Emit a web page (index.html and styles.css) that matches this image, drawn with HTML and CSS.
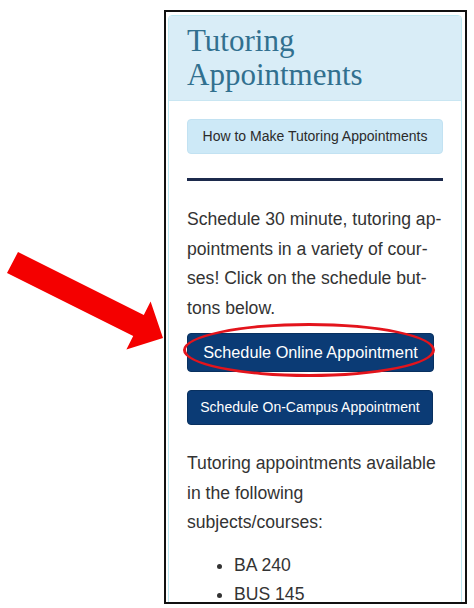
FILE: index.html
```html
<!DOCTYPE html>
<html lang="en">
<head>
  <meta charset="UTF-8" />
  <title>Tutoring Appointments</title>
  <meta name="viewport" content="width=device-width, initial-scale=1.0" />
  <link rel="stylesheet" href="styles.css">
</head>

<body>
  <!-- red arrow pointing at the online button -->
  <svg class="arrow" width="474" height="608" viewBox="0 0 474 608">
    <polygon points="18,252 143.8,314.9 150.6,301.4 163,338 126.4,349.6 133.2,336.1 7,273" fill="#f40000" />
  </svg>

  <div class="frame">
    <div class="panel">
      <div class="panel-heading">
        <h2>Tutoring Appointments</h2>
      </div>

      <div class="panel-body">
        <div class="btn btn-info">How to Make Tutoring Appointments</div>
        <hr>
        <p>Schedule 30 minute, tutoring ap&shy;pointments in a variety of cour&shy;ses! Click on the schedule but&shy;tons below.</p>

        <div class="btn btn-primary btn-online">
          Schedule Online Appointment
          <span class="circle"></span>
        </div>
        <div class="btn btn-primary btn-campus">Schedule On-Campus Appointment</div>

        <p class="subjects">Tutoring appointments available in the following subjects/courses:</p>
        <ul>
          <li>BA 240</li>
          <li>BUS 145</li>
        </ul>
      </div>
    </div>
  </div>
</body>
</html>
```

FILE: styles.css
```css
body {
  margin: 0;
  font-family: 'Liberation Sans', Arial, Helvetica, sans-serif;
  background: #ffffff;
  color: #333333;
}

.arrow {
  position: absolute;
  left: 0;
  top: 0;
  pointer-events: none;
}

.frame {
  margin: 10px 0 0 164px;
  border: 2px solid #111111;
  padding: 3px 3px 0 2px;
  box-sizing: border-box;
  width: 303px;
  height: 594px;
  overflow: hidden;
}

.panel {
  border: 1px solid #bce8f1;
  border-radius: 4px;
  background: #ffffff;
  min-height: 700px;
}

.panel-heading {
  background-color: #d9edf7;
  border-bottom: 1px solid #c9e6f2;
  border-radius: 3px 3px 0 0;
  padding: 8px 18px 8px;
}

.panel-heading h2 {
  margin: 0;
  font-family: 'Liberation Serif', Georgia, serif;
  font-weight: normal;
  font-size: 31px;
  line-height: 34px;
  color: #31708f;
}

.panel-body {
  padding: 18px 18px 0 18px;
}

.btn {
  border-radius: 4px;
  box-sizing: border-box;
  text-align: center;
}

.btn-info {
  background-color: #cde9f7;
  border: 1px solid #c2e2f2;
  color: #2b2b2b;
  font-size: 14px;
  height: 35px;
  line-height: 33px;
}

hr {
  margin: 24px 0 0;
  border: none;
  height: 3px;
  background: #1c2a4c;
}

p {
  margin: 24px 0 0;
  font-size: 17.6px;
  line-height: 29.5px;
  hyphens: manual;
}

.btn-primary {
  background-color: #0b3b75;
  border: 1px solid #08305f;
  color: #ffffff;
  position: relative;
}

.btn-online {
  margin-top: 10px;
  width: 247px;
  height: 39px;
  line-height: 37px;
  font-size: 16.3px;
}

.circle {
  position: absolute;
  left: -5px;
  top: -11px;
  width: 252px;
  height: 54px;
  border: 3px solid #e3141c;
  border-radius: 50%;
  box-sizing: border-box;
}

.btn-campus {
  margin-top: 18px;
  width: 246px;
  height: 35px;
  line-height: 33px;
  font-size: 14px;
}

.subjects {
  margin-top: 24px;
}

ul {
  margin: 13px 0 0;
  padding-left: 47px;
  font-size: 17.6px;
  line-height: 29px;
}
```
